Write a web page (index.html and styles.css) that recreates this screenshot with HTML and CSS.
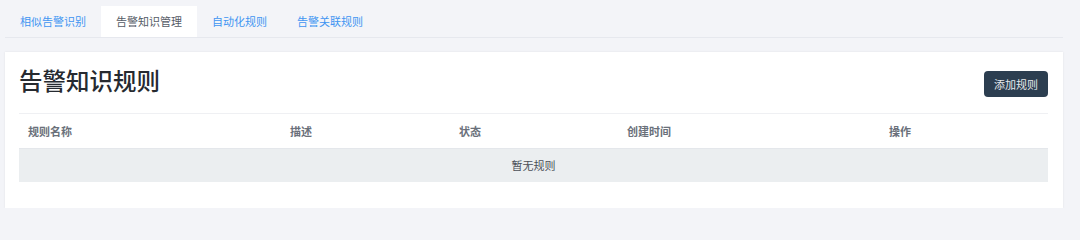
FILE: index.html
```html
<!DOCTYPE html>
<html lang="zh">
<head>
<meta charset="utf-8">
<title>告警知识规则</title>
<link rel="stylesheet" href="styles.css">
</head>
<body>
<div class="page">
  <nav class="tabs">
    <div class="tab">相似告警识别</div>
    <div class="tab active">告警知识管理</div>
    <div class="tab">自动化规则</div>
    <div class="tab">告警关联规则</div>
  </nav>
  <section class="card">
    <header class="card-head">
      <h1 class="title">告警知识规则</h1>
      <button class="btn">添加规则</button>
    </header>
    <div class="table">
      <div class="row head">
        <div class="cell">规则名称</div>
        <div class="cell">描述</div>
        <div class="cell">状态</div>
        <div class="cell">创建时间</div>
        <div class="cell">操作</div>
      </div>
      <div class="empty">暂无规则</div>
    </div>
  </section>
</div>
</body>
</html>
```
FILE: styles.css
```css
html, body {
  margin: 0;
  padding: 0;
  background: #f3f4f8;
  font-family: "Noto Sans CJK SC", "Noto Sans", sans-serif;
}
.page {
  padding: 6px 17px 0 5px;
}
.tabs {
  display: flex;
  border-bottom: 1px solid #e6e8ee;
}
.tab {
  height: 31px;
  line-height: 31px;
  padding: 0 15px;
  font-size: 11px;
  color: #3f95f2;
}
.tab.active {
  background: #ffffff;
  color: #555b66;
}
.card {
  margin-top: 14px;
  background: #ffffff;
  box-shadow: 0 0 2px rgba(0, 0, 0, 0.08);
  padding: 12px 15px 26px 14px;
}
.card-head {
  display: flex;
  justify-content: space-between;
  align-items: flex-end;
  padding-bottom: 16px;
  border-bottom: 1px solid #eff0f3;
}
.title {
  margin: 0;
  font-size: 23.5px;
  line-height: 33px;
  font-weight: 500;
  color: #262a30;
}
.btn {
  height: 26px;
  padding: 0 10px;
  border: none;
  border-radius: 4px;
  background: #2c3e50;
  color: #e6e9ed;
  font-family: inherit;
  font-size: 11px;
  cursor: pointer;
}
.row.head {
  display: grid;
  grid-template-columns: 262px 169px 168px 262px 1fr;
  height: 34px;
  align-items: center;
  border-bottom: 1px solid #e4e7eb;
}
.cell {
  padding: 0 9px;
  font-size: 11px;
  font-weight: 700;
  color: #6a707a;
}
.empty {
  height: 33px;
  line-height: 33px;
  text-align: center;
  background: #ebeef0;
  font-size: 11px;
  color: #4a4f57;
}
```
